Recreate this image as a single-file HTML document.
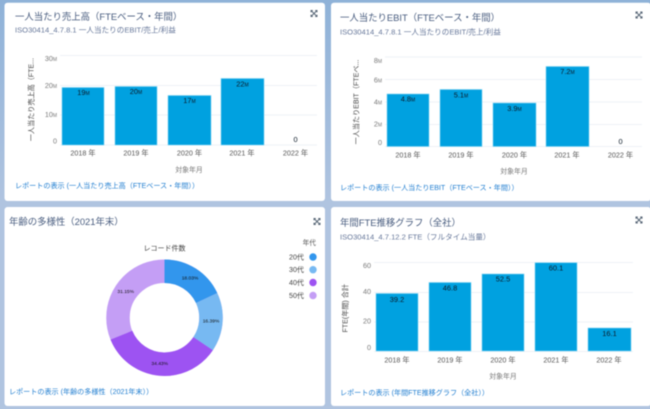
<!DOCTYPE html>
<html lang="ja"><head><meta charset="utf-8">
<style>
html,body{margin:0;padding:0;width:650px;height:409px;overflow:hidden;background:#b0c4e0}
svg{display:block;font-family:"Liberation Sans","Noto Sans CJK JP",sans-serif}
.blur{filter:blur(.4px)}
.t{font-size:9.400px;fill:#475b7e}
.s{font-size:7.600px;fill:#66779a}
.l{font-size:7.100px;fill:#1f7dd0}
.y{font-size:7.200px;fill:#7a7a7a;text-anchor:end}
.x{font-size:7.200px;fill:#555;text-anchor:middle}
.a{font-size:6.900px;fill:#777;text-anchor:middle}
.v{font-size:7.400px;fill:#0c1a28;text-anchor:middle}
.r{font-size:7.100px;fill:#444;text-anchor:middle}
.g{stroke:#eef2f7;stroke-width:1}
.b{fill:#00a1e0;stroke:#7fd3f2;stroke-width:.6}
.i{stroke:#5a6878;stroke-width:1;fill:none}
</style></head><body>
<svg width="650" height="409" viewBox="0 0 650 409" xmlns="http://www.w3.org/2000/svg">
<defs>
<linearGradient id="bg" x1="0" y1="0" x2="0" y2="1"><stop offset="0" stop-color="#8fb2d8"/><stop offset=".5" stop-color="#b0c4e0"/><stop offset="1" stop-color="#b0c4e0"/></linearGradient>
<g id="ic"><path class="i" d="M.5 .5l5 5M5.500 .5l-5 5"/><path class="i" d="M0 1.800V0H1.800M4.200 0H6V1.800M0 4.200V6H1.800M4.200 6H6V4.200"/></g>
</defs>
<rect width="650" height="409" fill="url(#bg)"/>
<g class="blur">
<rect x="4.500" y="2.700" width="320.500" height="198.300" rx="3" fill="#fff"/>
<rect x="331" y="2.700" width="320" height="198.300" rx="3" fill="#fff"/>
<rect x="4.500" y="207" width="320.500" height="199" rx="3" fill="#fff"/>
<rect x="331" y="207" width="320" height="199" rx="3" fill="#fff"/>

<!-- Card 1 -->
<text x="15" y="20" class="t">一人当たり売上高（FTEベース・年間）</text>
<text x="15" y="32.700" class="s">ISO30414_4.7.8.1 一人当たりのEBIT/売上/利益</text>
<use href="#ic" x="311" y="10.500"/>
<path class="g" d="M60 55.500H317M60 85.500H317M60 115H317M60 145H317"/>
<text x="57" y="61.200" class="y">30<tspan font-size="5">M</tspan></text>
<text x="57" y="88" class="y">20<tspan font-size="5">M</tspan></text>
<text x="57" y="117.200" class="y">10<tspan font-size="5">M</tspan></text>
<text x="57" y="143.500" class="y">0</text>
<rect class="b" x="62" y="87.500" width="42" height="57.500"/>
<rect class="b" x="115" y="86.500" width="42" height="58.500"/>
<rect class="b" x="168" y="95.500" width="43" height="49.500"/>
<rect class="b" x="221" y="78.500" width="43" height="66.500"/>
<text x="83.500" y="95.200" class="v">19<tspan font-size="5">M</tspan></text>
<text x="136" y="94" class="v">20<tspan font-size="5">M</tspan></text>
<text x="189.500" y="103" class="v">17<tspan font-size="5">M</tspan></text>
<text x="242.500" y="86.500" class="v">22<tspan font-size="5">M</tspan></text>
<text x="295.500" y="142" class="v">0</text>
<text x="83" y="155.500" class="x">2018 年</text>
<text x="136" y="155.500" class="x">2019 年</text>
<text x="189.500" y="155.500" class="x">2020 年</text>
<text x="242" y="155.500" class="x">2021 年</text>
<text x="295.500" y="155.500" class="x">2022 年</text>
<text x="189" y="172" class="a">対象年月</text>
<text transform="translate(33.500,99.500) rotate(-90)" class="r">一人当たり売上高（FTE...</text>
<text x="15" y="188" class="l">レポートの表示 (一人当たり売上高（FTEベース・年間））</text>

<!-- Card 2 -->
<text x="340" y="20.800" class="t">一人当たりEBIT（FTEベース・年間）</text>
<text x="340" y="34.300" class="s">ISO30414_4.7.8.1 一人当たりのEBIT/売上/利益</text>
<use href="#ic" x="636" y="12"/>
<path class="g" d="M385 57H642M385 79.500H642M385 102H642M385 124.500H642M385 146.500H642"/>
<text x="382" y="63.200" class="y">8<tspan font-size="5">M</tspan></text>
<text x="382" y="82.500" class="y">6<tspan font-size="5">M</tspan></text>
<text x="382" y="104.500" class="y">4<tspan font-size="5">M</tspan></text>
<text x="382" y="126.500" class="y">2<tspan font-size="5">M</tspan></text>
<text x="382" y="145" class="y">0</text>
<rect class="b" x="387" y="94" width="42" height="52.500"/>
<rect class="b" x="440" y="89.500" width="42" height="57"/>
<rect class="b" x="493" y="103" width="43" height="43.500"/>
<rect class="b" x="546" y="66.500" width="43" height="80"/>
<text x="408" y="101.500" class="v">4.8<tspan font-size="5">M</tspan></text>
<text x="461" y="97.500" class="v">5.1<tspan font-size="5">M</tspan></text>
<text x="514.500" y="111" class="v">3.9<tspan font-size="5">M</tspan></text>
<text x="567.500" y="74" class="v">7.2<tspan font-size="5">M</tspan></text>
<text x="620.500" y="144" class="v">0</text>
<text x="408" y="157.500" class="x">2018 年</text>
<text x="461" y="157.500" class="x">2019 年</text>
<text x="514.500" y="157.500" class="x">2020 年</text>
<text x="567" y="157.500" class="x">2021 年</text>
<text x="620.500" y="157.500" class="x">2022 年</text>
<text x="514" y="173.500" class="a">対象年月</text>
<text transform="translate(358.500,102) rotate(-90)" class="r">一人当たりEBIT（FTEベ...</text>
<text x="340" y="190" class="l">レポートの表示 (一人当たりEBIT（FTEベース・年間））</text>

<!-- Card 3 -->
<text x="9" y="225" class="t">年齢の多様性（2021年末）</text>
<use href="#ic" x="314" y="218.500"/>
<text x="164.500" y="250.500" style="font-size:7px;fill:#444;text-anchor:middle">レコード件数</text>
<g transform="translate(164.500,317.700)">
<circle r="46.500" fill="none" stroke="#c49ef5" stroke-width="23.500"/>
<circle r="46.500" fill="none" stroke="#3296ed" stroke-width="23.500" pathLength="100" stroke-dasharray="18.03 81.97" transform="rotate(-90)"/>
<circle r="46.500" fill="none" stroke="#77b9f2" stroke-width="23.500" pathLength="100" stroke-dasharray="16.39 83.61" transform="rotate(-25.100)"/>
<circle r="46.500" fill="none" stroke="#9d53f2" stroke-width="23.500" pathLength="100" stroke-dasharray="34.43 65.57" transform="rotate(33.900)"/>
</g>
<g style="font-size:4.900px;fill:#111;text-anchor:middle">
<text x="190" y="279.500">18.03%</text>
<text x="211" y="322.500">16.39%</text>
<text x="159.700" y="365">34.43%</text>
<text x="125.700" y="293">31.15%</text>
</g>
<text x="316" y="245" style="font-size:6.700px;fill:#555;text-anchor:end">年代</text>
<g style="font-size:7.100px;fill:#444;text-anchor:end">
<text x="304" y="259.500">20代</text>
<text x="304" y="272">30代</text>
<text x="304" y="285">40代</text>
<text x="304" y="298">50代</text>
</g>
<circle cx="313" cy="257" r="3.700" fill="#3296ed"/>
<circle cx="313" cy="269.700" r="3.700" fill="#77b9f2"/>
<circle cx="313" cy="282.500" r="3.700" fill="#9d53f2"/>
<circle cx="313" cy="295.500" r="3.700" fill="#c49ef5"/>
<text x="9" y="394" class="l">レポートの表示 (年齢の多様性（2021年末））</text>

<!-- Card 4 -->
<text x="340" y="225.800" class="t">年間FTE推移グラフ（全社）</text>
<text x="340" y="239.300" class="s">ISO30414_4.7.12.2 FTE（フルタイム当量）</text>
<use href="#ic" x="636" y="217"/>
<path class="g" d="M374 262.500H633M374 292.500H633M374 322H633M374 351.500H633"/>
<text x="371" y="268.200" class="y">60</text>
<text x="371" y="294.200" class="y">40</text>
<text x="371" y="323.500" class="y">20</text>
<text x="371" y="350" class="y">0</text>
<rect class="b" x="376" y="293.500" width="42" height="57.500"/>
<rect class="b" x="429" y="282.500" width="42" height="68.500"/>
<rect class="b" x="482" y="274" width="42" height="77"/>
<rect class="b" x="535" y="262.700" width="42" height="88.300"/>
<rect class="b" x="588" y="328" width="43" height="23"/>
<text x="397" y="301.800" class="v">39.2</text>
<text x="450" y="290.500" class="v">46.8</text>
<text x="503" y="281.500" class="v">52.5</text>
<text x="556" y="270.500" class="v">60.1</text>
<text x="609.500" y="335.800" class="v">16.1</text>
<text x="397" y="362.500" class="x">2018 年</text>
<text x="450" y="362.500" class="x">2019 年</text>
<text x="503" y="362.500" class="x">2020 年</text>
<text x="556" y="362.500" class="x">2021 年</text>
<text x="609" y="362.500" class="x">2022 年</text>
<text x="503" y="378.500" class="a">対象年月</text>
<text transform="translate(347.500,308.300) rotate(-90)" class="r">FTE(年間) 合計</text>
<text x="340" y="395" class="l">レポートの表示 (年間FTE推移グラフ（全社））</text>
</g>
</svg>
</body></html>
